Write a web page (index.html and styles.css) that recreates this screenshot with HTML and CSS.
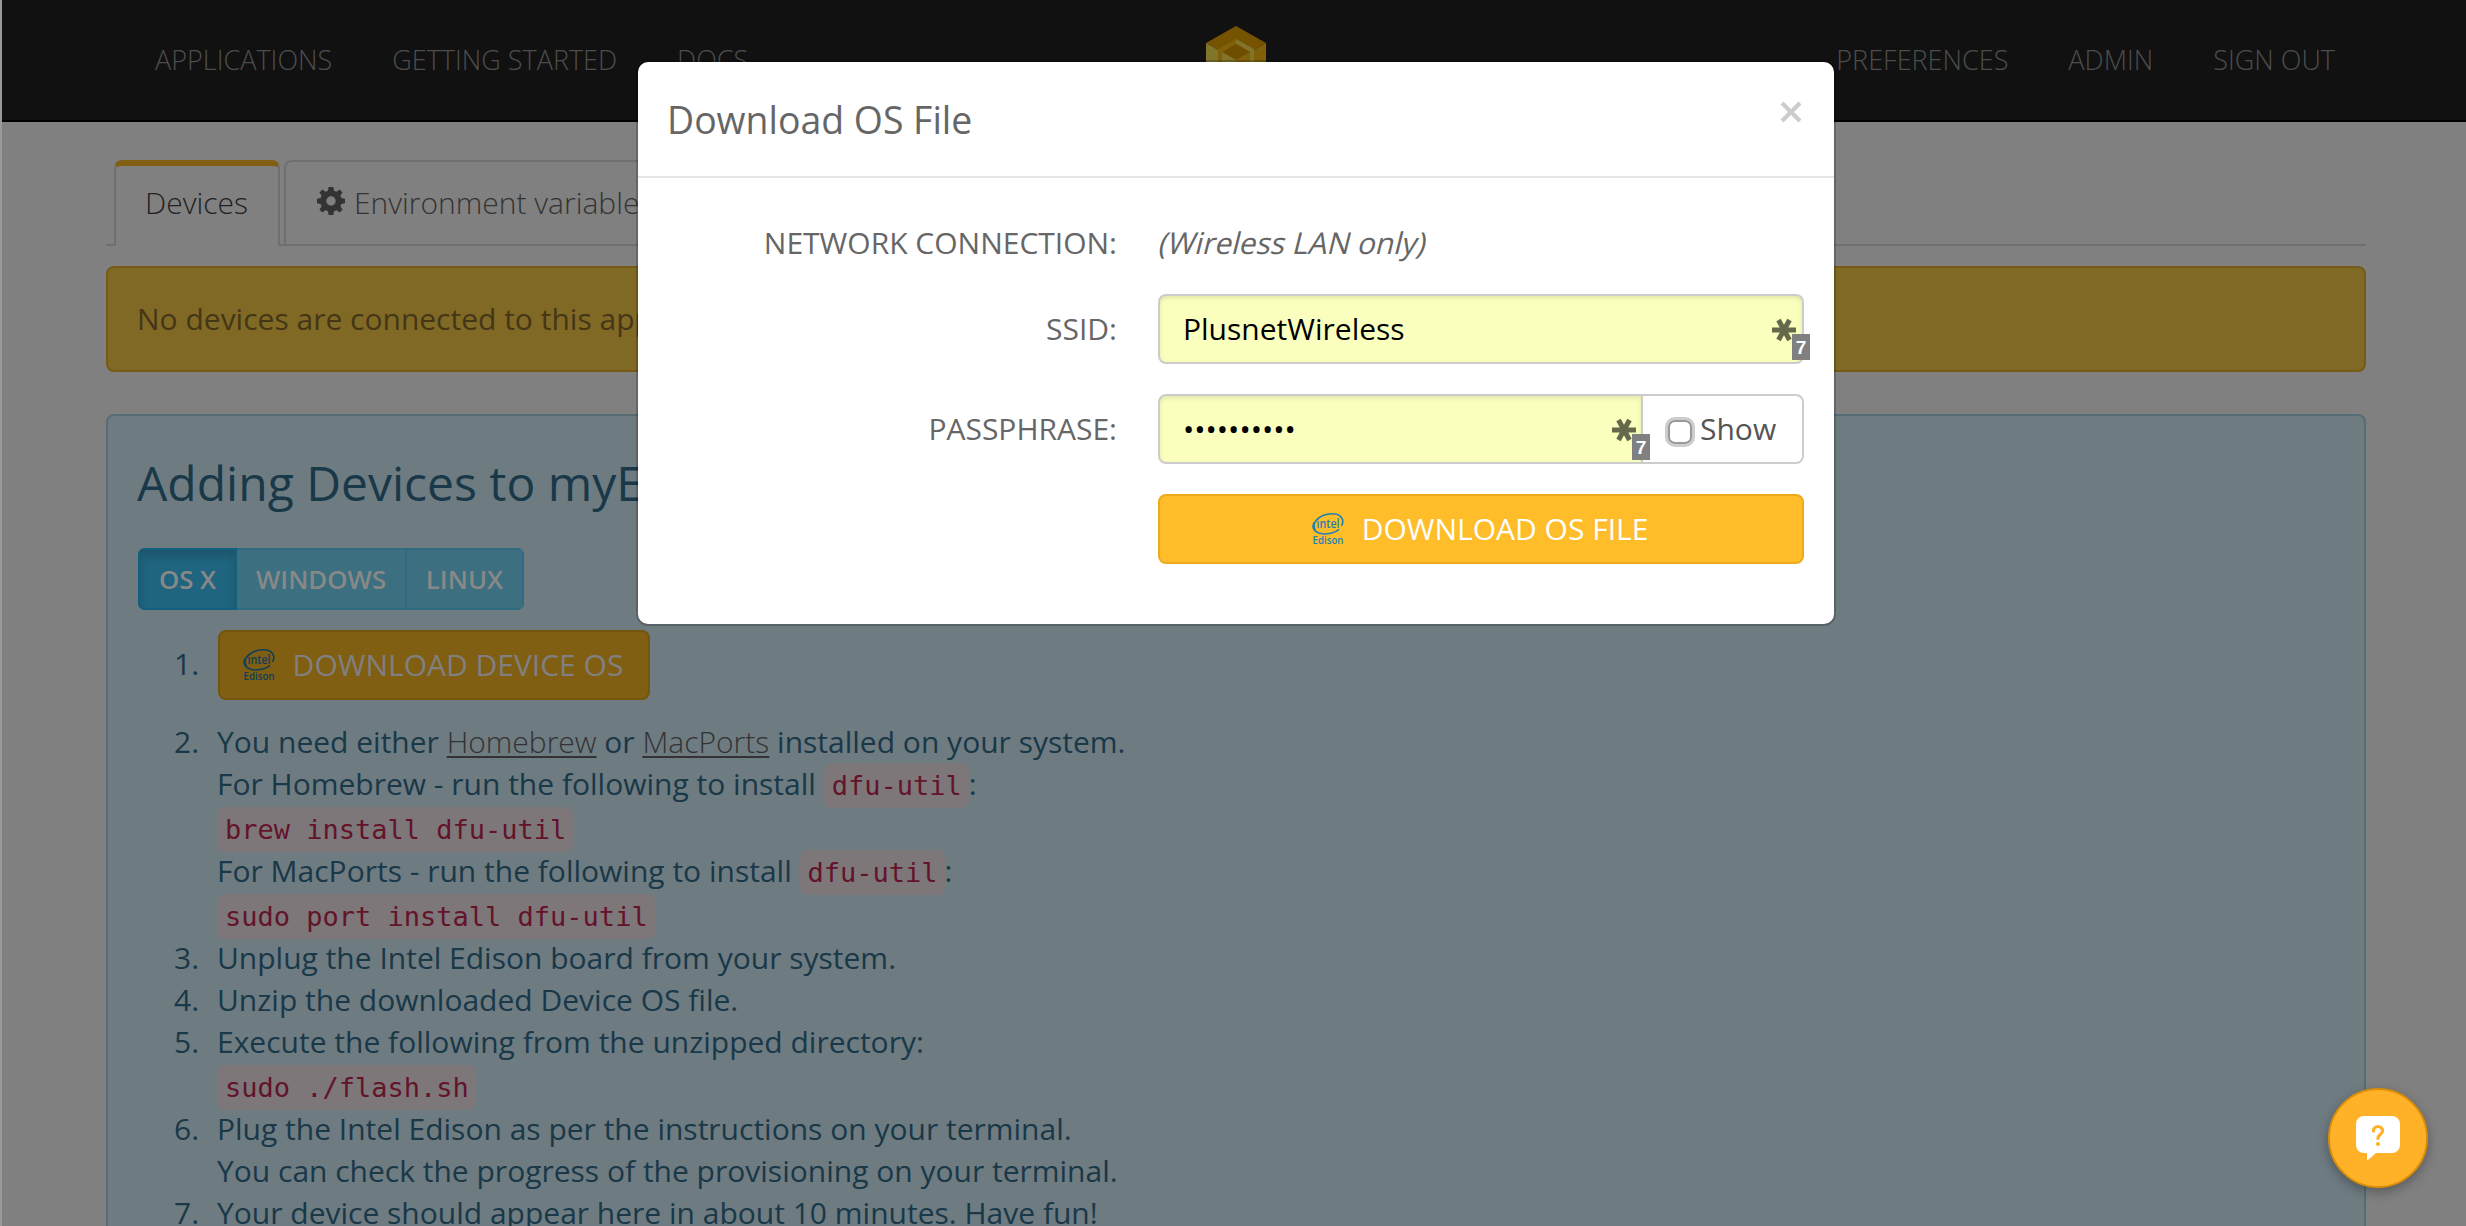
FILE: index.html
```html
<!DOCTYPE html>
<html lang="en">
<head>
<meta charset="utf-8">
<title>Devices</title>
<link rel="stylesheet" href="styles.css">
</head>
<body>
<header class="navbar">
  <nav class="links"><a>APPLICATIONS</a><a>GETTING STARTED</a><a>DOCS</a></nav>
  <svg class="logo" width="60" height="68" viewBox="0 0 60 68">
    <path d="M30 0L60 17 30 34 0 17z" fill="#755300"/>
    <path d="M0 17l30 17v34L0 51z" fill="#80752b"/>
    <path d="M60 17L30 34v34l30-17z" fill="#80610a"/>
    <path d="M30 13L48 23v20L30 54 12 43V23z" fill="#80610a"/>
    <path d="M30 13l18 10v20h-4V26L30 17.500z" fill="#80752b"/>
    <path d="M30 18l14 8-14 8-14-8z" fill="#6f4d00"/>
    <path d="M16 26l14 8v16l-14-8z" fill="#80752b"/>
  </svg>
  <nav class="links"><a>PREFERENCES</a><a>ADMIN</a><a>SIGN OUT</a></nav>
</header>
<main class="container">
  <div class="tabs">
    <div class="tab active">Devices</div>
    <div class="tab">
      <svg class="gear" width="28" height="28" viewBox="-14 -14 28 28"><path fill-rule="evenodd" d="M-2.400-14h4.800l.7 3.700 2.400 1L8.700-11.500l2.900 2.900L9.400-5.400l1 2.400 3.600.7v4.600l-3.600.7-1 2.400 2.200 3.200-2.900 2.900-3.200-2.200-2.400 1L2.400 14h-4.800l-.7-3.700-2.400-1-3.200 2.200-2.900-2.900 2.200-3.200-1-2.400-3.600-.7v-4.600l3.600-.7 1-2.400-2.200-3.200 2.900-2.900 3.200 2.200 2.400-1zM0-4.700A4.700 4.700 0 1 0 0 4.700 4.700 4.700 0 0 0 0-4.700z"/></svg>
      <span>Environment variables</span>
    </div>
  </div>
  <div class="alert">No devices are connected to this application yet.</div>
  <section class="guide">
    <h2>Adding Devices to myEdison</h2>
    <div class="btn-group"><span class="active">OS X</span><span>WINDOWS</span><span>LINUX</span></div>
    <ol class="steps">
      <li class="first"><div class="btn btn-dim">
        <svg class="edison" width="32" height="36" viewBox="0 0 32 36">
          <path d="M3.500 19.500C-1.500 11 8 3.200 20 2.800c9-.2 13 6 9.500 12M2.200 11.500C-2 19 6 24 15 22.800c6-.7 10-2.400 12-4.600"/>
          <text x="16" y="16.500" text-anchor="middle" font-size="12" textLength="23" lengthAdjust="spacingAndGlyphs">intel</text>
          <text x="16" y="33" text-anchor="middle" font-size="10.500" textLength="31" lengthAdjust="spacingAndGlyphs">Edison</text>
        </svg>DOWNLOAD DEVICE OS</div></li>
      <li>
        <p>You need either <a>Homebrew</a> or <a>MacPorts</a> installed on your system.</p>
        <p>For Homebrew - run the following to install <code>dfu-util</code>:</p>
        <p class="cmd"><code>brew install dfu-util</code></p>
        <p>For MacPorts - run the following to install <code>dfu-util</code>:</p>
        <p class="cmd"><code>sudo port install dfu-util</code></p>
      </li>
      <li><p>Unplug the Intel Edison board from your system.</p></li>
      <li><p>Unzip the downloaded Device OS file.</p></li>
      <li>
        <p>Execute the following from the unzipped directory:</p>
        <p class="cmd"><code>sudo ./flash.sh</code></p>
      </li>
      <li>
        <p>Plug the Intel Edison as per the instructions on your terminal.</p>
        <p>You can check the progress of the provisioning on your terminal.</p>
      </li>
      <li><p>Your device should appear here in about 10 minutes. Have fun!</p></li>
    </ol>
  </section>
</main>
<div class="edge"></div>
<div class="modal">
  <div class="modal-head"><h3>Download OS File</h3><span class="close"><svg width="22" height="22" viewBox="0 0 22 22"><path d="M2 2l18 18M20 2L2 20" stroke="#ccc" stroke-width="4.200"/></svg></span></div>
  <div class="form">
    <label>NETWORK CONNECTION:</label><span class="note">(Wireless LAN only)</span>
    <label>SSID:</label>
    <div class="field"><div class="input">PlusnetWireless</div><svg class="key" width="24" height="24" viewBox="0 0 24 24"><path d="M0 12h24M6.500 2l11 20M17.500 2l-11 20"/></svg><b class="count">7</b></div>
    <label>PASSPHRASE:</label>
    <div class="group">
      <div class="field"><div class="input">••••••••••</div><svg class="key" width="24" height="24" viewBox="0 0 24 24"><path d="M0 12h24M6.500 2l11 20M17.500 2l-11 20"/></svg><b class="count">7</b></div>
      <div class="show"><i class="check"></i>Show</div>
    </div>
    <div class="btn">
      <svg class="edison" width="32" height="36" viewBox="0 0 32 36">
        <path d="M3.500 19.500C-1.500 11 8 3.200 20 2.800c9-.2 13 6 9.500 12M2.200 11.500C-2 19 6 24 15 22.800c6-.7 10-2.400 12-4.600"/>
        <text x="16" y="16.500" text-anchor="middle" font-size="12" textLength="23" lengthAdjust="spacingAndGlyphs">intel</text>
        <text x="16" y="33" text-anchor="middle" font-size="10.500" textLength="31" lengthAdjust="spacingAndGlyphs">Edison</text>
      </svg>DOWNLOAD OS FILE</div>
  </div>
</div>
<div class="chat">
  <svg width="44" height="44" viewBox="0 0 44 44"><path d="M8 0h28a8 8 0 0 1 8 8v21a8 8 0 0 1-8 8H20l-8 7h-1v-7H8a8 8 0 0 1-8-8V8a8 8 0 0 1 8-8z" fill="#fff"/><path d="M17.500 15c0-6 9-6 9 0 0 3.500-4.500 3-4.500 7.500" fill="none" stroke="#ffb228" stroke-width="3.200" stroke-linecap="round"/><circle cx="22" cy="28" r="2.100" fill="#ffb228"/></svg>
</div>
</body>
</html>
```
FILE: styles.css
```css
* { box-sizing: border-box; }
body {
  margin: 0;
  height: 1226px;
  overflow: hidden;
  background: #808080;
  color: #2b2b2b;
  font: 30px/42px "Open Sans", "Noto Sans", sans-serif;
  position: relative;
  display: flex;
  flex-direction: column;
}
h2, h3, p { margin: 0; font-weight: 400; }
.navbar {
  flex: none;
  height: 122px;
  background: #111;
  border-bottom: 2px solid #000;
  display: grid;
  grid-template-columns: 1fr 60px 1fr;
  padding: 0 131px 0 155px;
  align-items: start;
  color: #4d4d4d;
  font-size: 27px;
  font-weight: 300;
}
.links { display: flex; gap: 60px; padding-top: 39px; }
.links:last-child { justify-content: flex-end; }
.logo { margin: 26px 0 0 -9px; }
.container { flex: 1; min-height: 0; margin: 38px 100px 0 106px; display: flex; flex-direction: column; }
.tabs {
  flex: none;
  height: 86px;
  display: flex;
  gap: 4px;
  padding-left: 8px;
  border-bottom: 2px solid #6f6f6f;
}
.tab {
  height: 84px;
  padding: 20px 30px 0 29px;
  border: 2px solid #6f6f6f;
  border-bottom: 0;
  border-radius: 8px 8px 0 0;
  font-weight: 300;
  display: flex;
  color: #333;
}
.tab.active { height: 86px; background: #808080; border-top: 6px solid #805e12; padding-top: 16px; color: #222; }
.gear { fill: #333; margin: 5px 9px 0 2px; }
.alert {
  flex: none;
  margin-top: 20px;
  height: 106px;
  border: 2px solid #755a18;
  border-radius: 8px;
  background: #806925;
  padding: 30px 29px;
  color: #443617;
}
.guide {
  flex: 1;
  min-height: 0;
  overflow: hidden;
  margin-top: 42px;
  border: 2px solid #566d75;
  border-bottom: 0;
  border-radius: 8px 8px 0 0;
  background: #6e7b81;
  padding: 37px 30px 0;
  color: #193848;
}
.guide h2 { font-size: 48px; line-height: 60px; margin-left: -1px; }
.btn-group { display: flex; margin-top: 35px; height: 62px; width: 386px; border-radius: 7px; overflow: hidden; color: #888; font-size: 25.8px; font-weight: 600; line-height: 58px; }
.btn-group span { width: 117px; text-align: center; background: #3c6f80; border: 2px solid #2e6b80; border-left-width: 0; }
.btn-group span:nth-child(2) { width: 170px; }
.btn-group .active { width: 99px; background: #20657f; border-color: #126080; border-left-width: 2px; box-shadow: inset 0 6px 10px rgba(0,0,0,.16); }
.steps { margin: 20px 0 0; padding: 0 0 0 79px; list-style: none; counter-reset: step; }
.steps li { position: relative; counter-increment: step; }
.steps li::before { content: counter(step) "."; position: absolute; left: -43px; top: 0; }
.steps .first { margin: 0 0 21px 1px; }
.steps .first::before { left: -44px; top: 13px; }
.steps a { font-weight: 300; color: #333; text-decoration: underline; text-decoration-thickness: 2px; text-underline-offset: 3px; }
.cmd { line-height: 45px; }
code { font: 27px/30px "DejaVu Sans Mono", monospace; color: #63132a; background: #7d7779; border-radius: 8px; padding: 7px 7px 7px 8px; }
.btn {
  height: 70px;
  border: 2px solid #ecaa1c;
  border-radius: 8px;
  background: #ffbd2a;
  color: #fff;
  display: flex;
  align-items: center;
  justify-content: center;
  gap: 18px;
  padding-right: 2px;
}
.btn-dim { width: 432px; background: #805e12; border-color: #75550e; color: #808080; }
.edison { color: #1f7fb5; }
.btn-dim .edison { color: #0f405b; }
.edison path { fill: none; stroke: currentColor; stroke-width: 1.6; }
.edison text { font-family: "Open Sans", sans-serif; font-weight: 600; fill: currentColor; }
.edge { position: absolute; left: 0; top: 0; width: 2px; height: 1226px; background: #999; }
.modal {
  position: absolute;
  left: 638px;
  top: 62px;
  width: 1196px;
  height: 562px;
  background: #fff;
  border-radius: 10px;
  box-shadow: 0 0 0 2px rgba(0,0,0,.2);
  color: #666;
}
.modal-head { height: 116px; border-bottom: 2px solid #e5e5e5; padding: 31px 32px 0 29px; display: flex; justify-content: space-between; }
.modal-head h3 { font-size: 37.4px; line-height: 54px; }
.close { margin-top: 8px; height: 22px; line-height: 0; }
.form { display: grid; grid-template-columns: 479px 646px; column-gap: 41px; row-gap: 30px; padding-top: 44px; }
.form label { text-align: right; align-self: center; }
.form > .btn { grid-column: 2; }
.note { justify-self: start; padding-left: 2px; transform: skewX(-14deg); }
.field { position: relative; flex: 1; }
.input { height: 70px; border: 2px solid #ccc; border-radius: 8px; background: #faffbd; box-shadow: inset 0 2px 4px rgba(0,0,0,.1); color: #000; padding: 12px 23px; }
.key { position: absolute; right: 8px; top: 24px; fill: none; stroke: #66684c; stroke-width: 5; }
.count { position: absolute; right: -6px; top: 40px; width: 18px; height: 26px; background: #808080; color: #fff; font: bold 19px/27px "Liberation Sans", sans-serif; text-align: center; }
.group { display: flex; }
.group .input { border-radius: 8px 0 0 8px; }
.group .key { right: 7px; }
.group .count { right: -7px; z-index: 1; }
.show { width: 161px; height: 70px; border: 2px solid #ccc; border-left: 0; border-radius: 0 8px 8px 0; display: flex; color: #555; padding: 12px 0 0 25px; }
.check { width: 24px; height: 24px; margin: 12px 8px 0 0; border: 2px solid #999; border-radius: 7px; box-shadow: 0 0 0 3px #ccc; }
.chat {
  position: absolute;
  left: 2328px;
  top: 1088px;
  width: 100px;
  height: 100px;
  border-radius: 50%;
  border: 2px solid #d88e08;
  background: #ffb228;
  box-shadow: 0 4px 12px rgba(0,0,0,.3);
  padding: 26px;
  line-height: 0;
}
```
